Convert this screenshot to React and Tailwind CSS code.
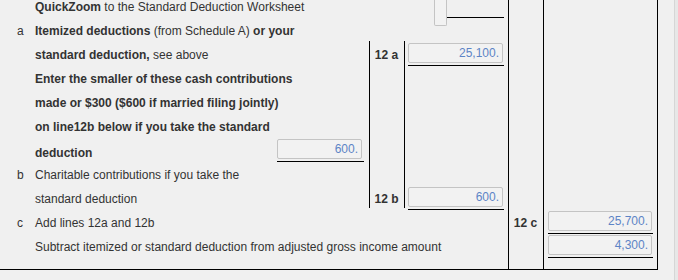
import React from 'react';

// Read-only amount box with the black rule under it
const Amount = ({ value, className = '', boxClass = 'mr-[1px]' }) => (
  <div className={`flex flex-col ${className}`}>
    <div
      className={`h-[20px] border border-[#c4c4c4] rounded-[2px] bg-[#f2f2f2] text-right pr-[3px] leading-[18px] text-[#5d84c6] ${boxClass}`}
    >
      {value}
    </div>
    <div className="mt-[2px] h-px bg-black" />
  </div>
);

const Line = ({ letter = '', children }) => (
  <div className="flex items-center col-start-1">
    <span className="w-[35px] pl-[17px] shrink-0">{letter}</span>
    <span className="whitespace-nowrap">{children}</span>
  </div>
);

export default function App() {
  return (
    <div className="w-[678px] h-[280px] bg-[#f0f0f0] overflow-hidden flex font-['Liberation_Sans',Arial,sans-serif] text-[12px] text-[#333]">
      <div className="w-[658px] shrink-0 h-[270px] border-b border-black">
        <div className="-mt-[5px] grid grid-cols-[369px_35px_104px_35px_115px] grid-rows-[repeat(11,24px)_10px]">
          {/* column rules */}
          <div className="col-start-2 col-span-2 row-start-3 row-end-10 border-l border-black -mt-[2px] mb-[3px]" />
          <div className="col-start-3 row-start-3 row-end-10 border-l border-black -mt-[2px] mb-[3px]" />
          <div className="col-start-4 row-start-1 -row-end-1 border-l border-black" />
          <div className="col-start-5 row-start-1 -row-end-1 border-l border-r border-black" />

          {/* left text column */}
          <Line>
            <b>QuickZoom</b> to the Standard Deduction Worksheet
          </Line>
          <Line letter="a">
            <b>Itemized deductions</b> (from Schedule A) <b>or your</b>
          </Line>
          <Line>
            <b>standard deduction,</b> see above
          </Line>
          <Line>
            <b>Enter the smaller of these cash contributions</b>
          </Line>
          <Line>
            <b>made or $300 ($600 if married filing jointly)</b>
          </Line>
          <Line>
            <b>on line12b below if you take the standard</b>
          </Line>
          <div className="col-start-1 flex items-start">
            <span className="w-[35px] shrink-0" />
            <b className="mt-[5px]">deduction</b>
            <Amount value="600." className="ml-auto mr-[5px] w-[87px]" boxClass="mr-[2px]" />
          </div>
          <Line letter="b">Charitable contributions if you take the</Line>
          <Line>standard deduction</Line>
          <Line letter="c">Add lines 12a and 12b</Line>
          <Line>Subtract itemized or standard deduction from adjusted gross income amount</Line>

          {/* partial field at top, scrolled off */}
          <div className="col-start-3 row-start-1 row-span-2 flex items-start">
            <div className="ml-[30px] w-[13px] h-[31px] border border-t-0 border-[#c4c4c4] rounded-b-[2px] bg-[#f2f2f2]" />
            <div className="mt-[22px] h-px flex-1 bg-black mr-[4px]" />
          </div>

          {/* 12a */}
          <div className="col-start-2 row-start-3 flex items-center justify-center font-bold">12 a</div>
          <Amount value="25,100." className="col-start-3 row-start-3 pl-[4px] pr-[4px]" />

          {/* 12b */}
          <div className="col-start-2 row-start-9 flex items-center justify-center font-bold">12 b</div>
          <Amount value="600." className="col-start-3 row-start-9 pl-[4px] pr-[4px]" />

          {/* 12c */}
          <div className="col-start-4 row-start-10 flex items-center justify-center font-bold">12 c</div>
          <Amount value="25,700." className="col-start-5 row-start-10 pl-[5px] pr-[5px]" />
          <Amount value="4,300." className="col-start-5 row-start-11 pl-[5px] pr-[5px]" />
        </div>
      </div>
      <div className="w-[16px] shrink-0" />
      <div className="w-px bg-[#d6d6d6] shrink-0" />
      <div className="flex-1 bg-[#e7e7e7]" />
    </div>
  );
}
